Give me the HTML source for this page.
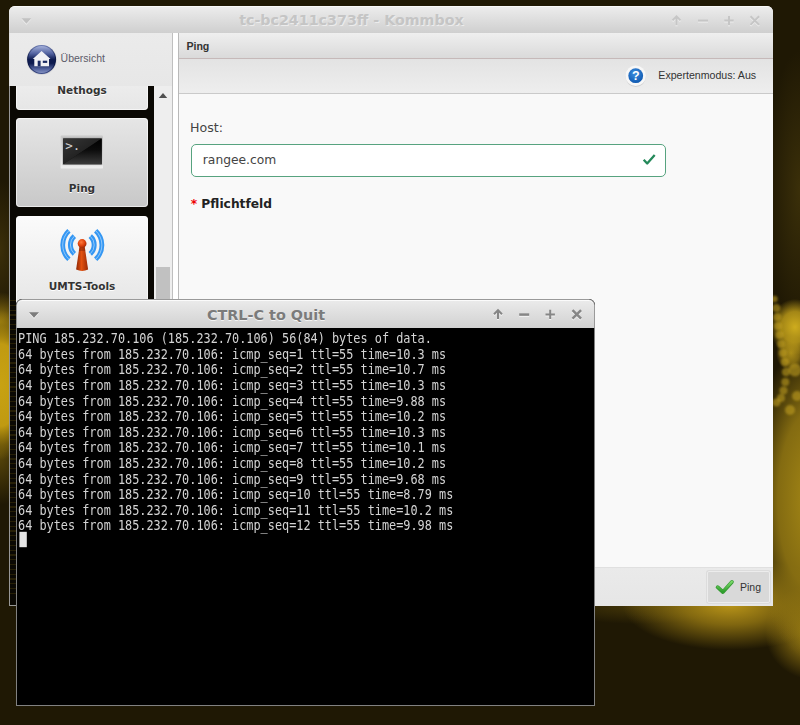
<!DOCTYPE html>
<html lang="de">
<head>
<meta charset="utf-8">
<title>Kommbox - Ping</title>
<style>
*{box-sizing:border-box;margin:0;padding:0}
html,body{width:800px;height:725px;overflow:hidden}
body{position:relative;background:#1f1804;font-family:"Liberation Sans",sans-serif;font-size:10px;color:#333}
.abs,#win div,#win span,#term div{position:absolute}
/* desktop wallpaper */
#bg{position:absolute;left:0;top:0;width:800px;height:725px;background:
 radial-gradient(ellipse 40px 75px at 0px 385px,#c8a212 0%,#c09a11 55%,rgba(150,120,12,.55) 80%,rgba(31,24,4,0) 100%),
 radial-gradient(ellipse 30px 30px at 0px 322px,rgba(170,138,18,.9) 0%,rgba(120,96,12,.55) 60%,rgba(31,24,4,0) 100%),
 radial-gradient(ellipse 26px 70px at 0px 250px,rgba(66,52,10,.8) 0%,rgba(31,24,4,0) 100%),
 radial-gradient(ellipse 30px 50px at 0px 455px,rgba(110,88,12,.7) 0%,rgba(31,24,4,0) 100%),
 radial-gradient(ellipse 25px 28px at 795px 327px,rgba(206,172,30,1) 0%,rgba(186,153,25,.85) 55%,rgba(31,24,4,0) 100%),
 radial-gradient(ellipse 15px 18px at 791px 353px,rgba(185,152,26,.9) 0%,rgba(165,134,22,.7) 55%,rgba(31,24,4,0) 100%),
 radial-gradient(ellipse 62px 160px at 812px 500px,rgba(165,136,22,1) 0%,rgba(140,114,18,.92) 55%,rgba(31,24,4,0) 100%),
 radial-gradient(ellipse 108px 46px at 730px 604px,rgba(192,154,26,.97) 0%,rgba(165,132,20,.72) 45%,rgba(31,24,4,0) 100%),
 radial-gradient(ellipse 50px 48px at 815px 632px,rgba(178,145,22,.97) 0%,rgba(150,120,18,.6) 55%,rgba(31,24,4,0) 100%),
 radial-gradient(ellipse 90px 18px at 640px 606px,rgba(85,68,10,.7) 0%,rgba(31,24,4,0) 100%),
 radial-gradient(ellipse 34px 140px at 800px 190px,rgba(62,50,10,.9) 0%,rgba(31,24,4,0) 100%),
 #1f1804}
/* main window : page coords x 10..773, y 6..606 */
#win{position:absolute;z-index:0;left:9px;top:5.5px;width:764px;height:600.5px;border-radius:6px 6px 0 0;background:#f9f9f9;overflow:hidden}
#wtitle{left:0;top:0;width:764px;height:27.6px;z-index:2;background:linear-gradient(#ececec,#cfcfcf);border-top:1px solid #f8f8f8}
#wtitle .t{left:130.4px;width:424px;top:5.8px;text-align:center;font:bold 14.25px "DejaVu Sans",sans-serif;color:#c5c5c5;text-shadow:1px 1px 0 #ececec;white-space:nowrap}
#side{left:0;top:27.5px;width:164px;height:573px;background:#eee;border-right:1px solid #bfbfbf;border-left:1px solid #e0e0e0}
#sidehead{left:0;top:0;width:162px;height:53px;background:linear-gradient(#ebebeb,#e7e7e7)}
#sidelist{left:0;top:53px;width:144px;height:520px;background:#0a0803;overflow:hidden}
.sbtn{left:6px;width:132px;border-radius:4px;background:linear-gradient(#fbfbfb,#e6e6e6);box-shadow:inset 0 0 0 1px rgba(255,255,255,.6);text-align:center;font:bold 10.5px "DejaVu Sans",sans-serif;color:#333;text-shadow:0 1px 0 #fff}
#scroll{left:144px;top:53px;width:18px;height:520px;background:#eee}
#gap{left:164px;top:27.5px;width:5px;height:573px;background:#fff}
#main{left:169px;top:27.5px;width:595px;height:573px;border-left:1px solid #b9b9b9;background:#f9f9f9}
#mhead{left:0;top:0;width:594px;height:26px;background:linear-gradient(#efefef,#dadada);border-bottom:1px solid #c6b9b9}
#mtool{left:0;top:26px;width:594px;height:35px;background:linear-gradient(#e3e3e3,#eeeeee);border-bottom:1px solid #cacaca}
#mfoot{left:0;top:534px;width:594px;height:39px;background:linear-gradient(#eaeaea,#e6e6e6);border-top:1px solid #e0e0e0}
/* terminal : page coords x 17..594, y 300..706 */
#term{position:absolute;left:16px;top:299px;width:579px;height:407px;border-radius:6px 6px 0 0;background:#000;overflow:hidden}
#ttitle{left:0;top:0;width:579px;height:29px;background:linear-gradient(#ebebeb,#d1d1d1);border:1px solid #9a9a9a;border-bottom:none;border-radius:6px 6px 0 0;box-shadow:inset 0 1px 0 #fbfbfb}
#ttitle .t{left:49px;width:400px;top:6.7px;text-align:center;font:bold 14.4px "DejaVu Sans",sans-serif;color:#7b7b7b;text-shadow:0 1px 0 #f4f4f4;white-space:nowrap}
#tbody{left:0;top:29px;width:579px;height:378px;background:#000;border:1.5px solid #818181;border-top:none}
#tbody pre{position:absolute;left:1.2px;top:3.3px;font:14.27px/15.6px "DejaVu Sans Mono","Liberation Mono",monospace;color:#d4d4d4;white-space:pre;transform:scaleX(.8308);transform-origin:0 0}
</style>
</head>
<body>
<div id="bg"></div>
<svg class="abs" style="left:0;top:0" width="800" height="725" viewBox="0 0 800 725"><defs><filter id="bl" x="-50%" y="-50%" width="200%" height="200%"><feGaussianBlur stdDeviation="1"/></filter></defs><g fill="#c6a422" fill-opacity=".55" filter="url(#bl)"><circle cx="774.5" cy="299" r="3.2"/><circle cx="776.3" cy="308" r="4"/><circle cx="777.2" cy="317" r="4"/><circle cx="778" cy="326" r="4"/><circle cx="779.5" cy="335" r="4"/><circle cx="781" cy="344" r="4"/><circle cx="783" cy="353" r="4"/><circle cx="785" cy="362" r="4.2"/><circle cx="786" cy="372" r="4.2"/><circle cx="785.3" cy="382" r="4"/><circle cx="783.5" cy="390.5" r="4"/><circle cx="781" cy="398" r="4"/><circle cx="776.5" cy="402.5" r="4"/><circle cx="795" cy="370" r="6.5"/><circle cx="797" cy="396" r="5"/><circle cx="790" cy="410" r="5"/></g></svg>

<div id="win">
  <div id="wtitle"><div class="t">tc-bc2411c373ff - Kommbox</div></div>
  <div id="side">
    <div id="sidehead"><span style="left:50.6px;top:18.9px;font-size:10.5px;color:#5c5c6a">Übersicht</span></div>
    <div id="sidelist">
      <div class="sbtn" style="top:-60px;height:84px;padding-top:58px">Nethogs</div>
      <div class="sbtn" style="top:32px;height:89px;padding-top:64px;background:linear-gradient(#e6e6e6,#c8c8c8)">Ping</div>
      <div class="sbtn" style="top:130px;height:89px;padding-top:64px">UMTS-Tools</div>
    </div>
    <div id="scroll">
      <div style="left:2.4px;top:181px;width:13.2px;height:40px;background:#c1c1c1"></div>
    </div>
  </div>
  <div id="gap"></div>
  <div style="left:0;top:80.5px;width:1px;height:520px;background:#979797"></div>
  <div style="left:0;top:599.5px;width:8px;height:1px;background:#979797"></div>
  <div style="left:1px;top:294.5px;width:6px;height:298px;background:repeating-linear-gradient(180deg,rgba(140,112,14,.22) 0,rgba(140,112,14,.22) 1.2px,rgba(0,0,0,0) 1.2px,rgba(0,0,0,0) 4.8px)"></div>
  <div id="main">
    <div id="mhead"><span style="left:7.4px;top:6.5px;font:bold 10.6px 'Liberation Sans',sans-serif;color:#333">Ping</span></div>
    <div id="mtool"><span style="right:16.9px;top:9.9px;font-size:10.6px;color:#333;white-space:nowrap">Expertenmodus: Aus</span></div>
    <div style="left:11px;top:87.4px;font:12.6px 'DejaVu Sans',sans-serif;color:#444">Host:</div>
    <div style="left:12px;top:111px;width:475px;height:33px;border:1.7px solid #57a37f;border-radius:5px;background:#fff;font:12.3px/31.6px 'DejaVu Sans',sans-serif;color:#444;padding-left:10.8px">rangee.com</div>
    <div style="left:11.7px;top:164px;font:bold 12.25px 'DejaVu Sans',sans-serif;color:#222;white-space:nowrap"><span style="position:static;color:#e00">*</span> Pflichtfeld</div>
    <div id="mfoot"><div style="left:528px;top:3px;width:63px;height:32px;background:#d9d9d9;border:1px solid #ececec;box-shadow:0 0 0 1px #dcdcdc;border-radius:2px"><span style="left:32px;top:9px;font-size:10.5px;color:#333">Ping</span></div></div>
  </div>
</div>

<svg class="abs" style="left:0;top:0" width="800" height="725" viewBox="0 0 800 725">
<path d="M21.5 19.2h9.8l-4.9 5.6z" fill="#efefef"/><path d="M21.5 18.2h9.8l-4.9 5.6z" fill="#c2c2c2"/>
<g fill="none" stroke="#ededed" stroke-width="2" transform="translate(0,1)"><path d="M676.5 25.20V17.40M672.5 20.40L676.5 16.40L680.5 20.40"/><path d="M698 20.6H708"/><path d="M724.3 20.6H733.7M729 15.90V25.3"/><path d="M750.5 16.3L759.09 24.90M759.09 16.3L750.5 24.90"/></g><g fill="none" stroke="#c6c6c6" stroke-width="2" transform="translate(0,0)"><path d="M676.5 25.20V17.40M672.5 20.40L676.5 16.40L680.5 20.40"/><path d="M698 20.6H708"/><path d="M724.3 20.6H733.7M729 15.90V25.3"/><path d="M750.5 16.3L759.09 24.90M759.09 16.3L750.5 24.90"/></g>
<defs>
<radialGradient id="hg" cx="50%" cy="62%" r="62%"><stop offset="0" stop-color="#17286a"/><stop offset=".62" stop-color="#0f1d55"/><stop offset=".85" stop-color="#3f4f8a"/><stop offset="1" stop-color="#8e9bc2"/></radialGradient>
<linearGradient id="hg2" x1="0" y1="0" x2="0" y2="1"><stop offset="0" stop-color="#aab4d6" stop-opacity=".85"/><stop offset=".45" stop-color="#7d8ab8" stop-opacity=".15"/><stop offset="1" stop-color="#5b6aa0" stop-opacity="0"/></linearGradient>
<linearGradient id="hg3" x1="0" y1="0" x2="0" y2="1"><stop offset="0" stop-color="#a4b0da"/><stop offset=".28" stop-color="#5262a0"/><stop offset=".5" stop-color="#0e1b50"/><stop offset=".64" stop-color="#0e1b50"/><stop offset=".86" stop-color="#5565a0"/><stop offset="1" stop-color="#8592c2"/></linearGradient>
<linearGradient id="hg4" x1="0" y1="0" x2="0" y2="1"><stop offset="0" stop-color="#6f7eb6"/><stop offset=".45" stop-color="#0c1848"/><stop offset=".7" stop-color="#0c1848"/><stop offset="1" stop-color="#3f4f8c"/></linearGradient>
<linearGradient id="tg" x1="0" y1="0" x2="1" y2="1"><stop offset="0" stop-color="#363636"/><stop offset=".5" stop-color="#232323"/></linearGradient>
<linearGradient id="tg2" x1="0" y1="0" x2="0" y2="1"><stop offset="0" stop-color="#000"/><stop offset=".45" stop-color="#0c0c0c"/><stop offset="1" stop-color="#3a3a3a"/></linearGradient>
<linearGradient id="tf" x1="0" y1="0" x2="0" y2="1"><stop offset="0" stop-color="#c8c8c8"/><stop offset="1" stop-color="#ededed"/></linearGradient>
<linearGradient id="cg" x1="0" y1="0" x2="1" y2="0"><stop offset="0" stop-color="#8e2504"/><stop offset=".45" stop-color="#e2510f"/><stop offset="1" stop-color="#9a2a05"/></linearGradient>
<radialGradient id="bg2" cx="40%" cy="35%" r="65%"><stop offset="0" stop-color="#ff7a3a"/><stop offset=".6" stop-color="#e0440c"/><stop offset="1" stop-color="#a52c06"/></radialGradient>
<radialGradient id="qg" cx="45%" cy="35%" r="70%"><stop offset="0" stop-color="#3f8fe0"/><stop offset="1" stop-color="#0c55ad"/></radialGradient>
<linearGradient id="kg" x1="0" y1="0" x2="0" y2="1"><stop offset="0" stop-color="#7bd86a"/><stop offset="1" stop-color="#2f9f2c"/></linearGradient>
</defs>
<circle cx="41.6" cy="59.9" r="15" fill="#7a7a86" fill-opacity=".18"/>
<circle cx="41.6" cy="59.5" r="14.5" fill="url(#hg4)"/>
<circle cx="41.6" cy="59.5" r="13.5" fill="url(#hg3)"/>
<path d="M41.6 50.9L50.5 58.9H49V66.3H34.3V58.9H32.8z" fill="#f1f1f5"/>
<rect x="37.7" y="60.7" width="2.9" height="5.6" fill="#1a2a63"/><rect x="42.8" y="60.7" width="4.4" height="2.2" fill="#1a2a63"/>
<rect x="60.6" y="135.5" width="42.4" height="33.1" rx="1.2" fill="url(#tf)"/>
<rect x="62.4" y="137.4" width="40" height="27.7" fill="#b4b4b4"/>
<rect x="63.2" y="138.5" width="38.5" height="25.7" fill="#0a0a0a"/>
<path d="M63.2 138.5H101.7L63.2 164.2z" fill="url(#tg)"/>
<path d="M101.7 138.5V164.2H63.2z" fill="url(#tg2)"/>
<text x="65.2" y="149.7" font-family="'DejaVu Sans Mono','Liberation Mono',monospace" font-size="12.5" fill="#cfcfcf">&gt;.</text>
<g fill="none" stroke="#3497f3" stroke-width="4.8">
<path d="M68.93 230.67A19.6 19.6 0 0 0 68.93 259.33"/><path d="M95.67 230.67A19.6 19.6 0 0 1 95.67 259.33"/>
<path d="M74.34 236.16A11.9 11.9 0 0 0 74.34 253.84" stroke-width="5"/><path d="M90.26 236.16A11.9 11.9 0 0 1 90.26 253.84" stroke-width="5"/>
</g>
<g fill="none" stroke="#9ccdf9" stroke-width=".9">
<path d="M68.93 230.67A19.6 19.6 0 0 0 68.93 259.33"/><path d="M95.67 230.67A19.6 19.6 0 0 1 95.67 259.33"/>
<path d="M74.34 236.16A11.9 11.9 0 0 0 74.34 253.84"/><path d="M90.26 236.16A11.9 11.9 0 0 1 90.26 253.84"/>
</g>
<path d="M79.6 246L76.1 269.6Q82.1 272.4 88.1 269.6L84.6 246z" fill="url(#cg)"/>
<path d="M79.6 246L78.9 251H85.3L84.6 246z" fill="#7a2004" opacity=".45"/>
<circle cx="82.1" cy="243.5" r="4.4" fill="url(#bg2)"/>
<path d="M158.8 98h8.4l-4.2-5z" fill="#505050"/>
<circle cx="635.7" cy="76.6" r="10.3" fill="#d2d2d2"/><circle cx="635.7" cy="75.8" r="10.3" fill="#f7f7f7"/>
<circle cx="635.7" cy="75.7" r="7.4" fill="url(#qg)"/>
<text x="635.7" y="80.3" text-anchor="middle" font-family="'Liberation Sans',sans-serif" font-weight="bold" font-size="12.5" fill="#fff">?</text>
<path d="M643.7 159.7L647.2 163.5L654.7 155" fill="none" stroke="#24895a" stroke-width="2.3" stroke-linejoin="round"/>
<path d="M717.6 587.2L722.9 592L731.9 582" fill="none" stroke="#359a33" stroke-width="3.8" stroke-linecap="round" stroke-linejoin="round"/>
<path d="M717.6 587L722.9 591.6L731.9 581.8" fill="none" stroke="url(#kg)" stroke-width="2.3" stroke-linecap="round" stroke-linejoin="round"/>
</svg>

<div id="term">
  <div id="ttitle"><div class="t">CTRL-C to Quit</div></div>
  <div id="tbody"><pre>PING 185.232.70.106 (185.232.70.106) 56(84) bytes of data.
64 bytes from 185.232.70.106: icmp_seq=1 ttl=55 time=10.3 ms
64 bytes from 185.232.70.106: icmp_seq=2 ttl=55 time=10.7 ms
64 bytes from 185.232.70.106: icmp_seq=3 ttl=55 time=10.3 ms
64 bytes from 185.232.70.106: icmp_seq=4 ttl=55 time=9.88 ms
64 bytes from 185.232.70.106: icmp_seq=5 ttl=55 time=10.2 ms
64 bytes from 185.232.70.106: icmp_seq=6 ttl=55 time=10.3 ms
64 bytes from 185.232.70.106: icmp_seq=7 ttl=55 time=10.1 ms
64 bytes from 185.232.70.106: icmp_seq=8 ttl=55 time=10.2 ms
64 bytes from 185.232.70.106: icmp_seq=9 ttl=55 time=9.68 ms
64 bytes from 185.232.70.106: icmp_seq=10 ttl=55 time=8.79 ms
64 bytes from 185.232.70.106: icmp_seq=11 ttl=55 time=10.2 ms
64 bytes from 185.232.70.106: icmp_seq=12 ttl=55 time=9.98 ms</pre></div>
</div>
<svg class="abs" style="left:0;top:0" width="800" height="725" viewBox="0 0 800 725">
<path d="M29 313.2h10l-5 5.6z" fill="#f6f6f6"/><path d="M29 312.2h10l-5 5.6z" fill="#7c7c7c"/>
<g fill="none" stroke="#f4f4f4" stroke-width="2" transform="translate(0,1)"><path d="M498 319.0V311.2M494 314.2L498 310.2L502 314.2"/><path d="M519.2 314.6H529.2" stroke-width="2.5"/><path d="M545.5 314.4H554.90M550.2 309.7V319.09"/><path d="M572.5 310.09L581.09 318.7M581.09 310.09L572.5 318.7" stroke-width="2.5"/></g><g fill="none" stroke="#868686" stroke-width="2" transform="translate(0,0)"><path d="M498 319.0V311.2M494 314.2L498 310.2L502 314.2"/><path d="M519.2 314.6H529.2" stroke-width="2.5"/><path d="M545.5 314.4H554.90M550.2 309.7V319.09"/><path d="M572.5 310.09L581.09 318.7M581.09 310.09L572.5 318.7" stroke-width="2.5"/></g>
<rect x="19.4" y="531.8" width="7.4" height="15.4" fill="#e6e6e6"/>
</svg>
</body>
</html>
